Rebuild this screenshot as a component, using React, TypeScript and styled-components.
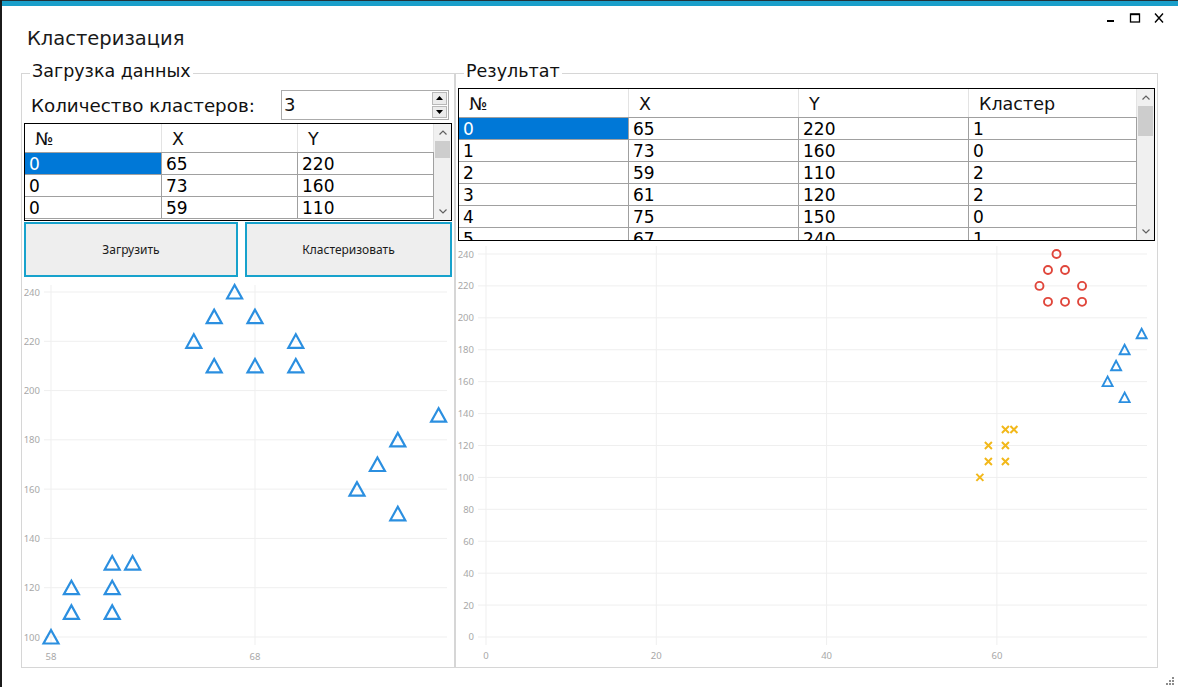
import styled, { createGlobalStyle } from "styled-components";

const Global = createGlobalStyle`
  html, body {
    margin: 0;
    padding: 0;
    background: #ffffff;
  }
  body {
    font-family: "DejaVu Sans", "Noto Sans", sans-serif;
    color: #111;
    overflow: hidden;
  }
`;

const Window = styled.div`
  width: 1178px;
  height: 687px;
  box-sizing: border-box;
  border-left: 2px solid #1b1b1b;
  display: flex;
  flex-direction: column;
  background: #fff;
`;

const TopStrip = styled.div`
  height: 5px;
  border-top: 1px solid #22343c;
  background: #1a9fca;
`;

const Header = styled.header`
  height: 55px;
  display: flex;
  justify-content: space-between;
  align-items: flex-start;
  padding-left: 25px;
`;

const Title = styled.h1`
  margin: 20px 0 0;
  font-size: 19.5px;
  font-weight: normal;
  line-height: 26px;
  color: #1a1a1a;
`;

const Controls = styled.div`
  display: flex;
  margin-top: 6px;
  padding-right: 7px;
`;

const Ctl = styled.button`
  width: 24px;
  height: 12px;
  padding: 0;
  border: none;
  background: none;
  display: flex;
  align-items: center;
  justify-content: center;
`;

const Main = styled.main`
  height: 607px;
  display: flex;
  padding-left: 19px;
`;

const GroupBox = styled.fieldset<{ $w: number }>`
  flex: 0 0 ${p => p.$w}px;
  width: ${p => p.$w}px;
  box-sizing: border-box;
  margin: 0;
  padding: 0 2px 1px;
  border: 1px solid #d6d6d6;
  min-width: 0;
  display: flex;
  flex-direction: column;
`;

const Legend = styled.legend`
  margin-left: 6px;
  padding: 0 2px 4px;
  font-size: 17.5px;
  line-height: 20px;
`;

const ClusterRow = styled.div`
  display: flex;
  align-items: center;
  height: 30px;
  margin-top: 5px;
`;

const FieldLabel = styled.label`
  flex: 0 0 257px;
  box-sizing: border-box;
  padding-left: 7px;
  font-size: 18.3px;
`;

const Spin = styled.div`
  width: 168px;
  height: 30px;
  box-sizing: border-box;
  border: 1px solid #ababab;
  display: flex;
`;

const SpinValue = styled.div`
  flex: 1;
  padding-left: 2px;
  font-size: 18px;
  line-height: 28px;
`;

const SpinButtons = styled.div`
  width: 15px;
  margin: 1px 1px 1px 0;
  display: flex;
  flex-direction: column;
  gap: 1px;
`;

const SpinBtn = styled.div`
  flex: 1;
  background: #ececec;
  border: 1px solid #b9b9b9;
  display: flex;
  align-items: center;
  justify-content: center;
`;

const Grid = styled.div<{ $h: number; $top: number }>`
  display: flex;
  height: ${p => p.$h}px;
  margin-top: ${p => p.$top}px;
  box-sizing: border-box;
  border: 1px solid #000;
  overflow: hidden;
  flex-shrink: 0;
  background: #fff;
`;

const Sheet = styled.div`
  flex: 1;
  overflow: hidden;
`;

const HeadRow = styled.div`
  display: flex;
  height: 29px;
  box-sizing: border-box;
  border-bottom: 1px solid #a0a0a0;
`;

const HeadCell = styled.div<{ $w: number }>`
  flex: 0 0 ${p => p.$w}px;
  box-sizing: border-box;
  padding-left: 10px;
  border-right: 1px solid #e3e3e3;
  font-size: 17.5px;
  line-height: 31px;
`;

const Row = styled.div`
  display: flex;
  height: 22px;
`;

const Cell = styled.div<{ $w: number; $sel?: boolean }>`
  flex: 0 0 ${p => p.$w}px;
  box-sizing: border-box;
  padding-left: 4px;
  border-right: 1px solid #a0a0a0;
  border-bottom: 1px solid #a0a0a0;
  background: ${p => (p.$sel ? "#0078d7" : "#fff")};
  color: ${p => (p.$sel ? "#fff" : "#000")};
  font-size: 17px;
  line-height: 23px;
`;

const ScrollBar = styled.div`
  flex: 0 0 17px;
  background: #f0f0f0;
  display: flex;
  flex-direction: column;
`;

const ScrollArrow = styled.div`
  height: 17px;
  display: flex;
  align-items: center;
  justify-content: center;
`;

const ScrollTrack = styled.div`
  flex: 1;
  padding: 0 1px;
`;

const Thumb = styled.div<{ $h: number }>`
  height: ${p => p.$h}px;
  background: #cdcdcd;
`;

const ButtonRow = styled.div`
  display: flex;
  gap: 7px;
  height: 55px;
  margin-top: 1px;
  flex-shrink: 0;
`;

const ActionButton = styled.button<{ $w?: number }>`
  flex: ${p => (p.$w ? `0 0 ${p.$w}px` : "1")};
  border: 2px solid #17a2cc;
  background: #eeeeee;
  font-family: "Noto Sans", sans-serif;
  font-size: 12px;
  color: #1a1a1a;
  padding: 0;
`;

const ChartBox = styled.div`
  flex: 1;
  min-height: 0;
`;

const Plot = styled.svg`
  display: block;
  font-family: "Noto Sans", sans-serif;
  font-size: 9.5px;
`;

const Footer = styled.footer`
  flex: 1;
  display: flex;
  justify-content: flex-end;
  align-items: flex-start;
  padding: 7px 4px 0 0;
`;

type Cellv = string | number;

const Chevron = ({ down }: { down?: boolean }) => (
  <svg width="8" height="5" viewBox="0 0 8 5">
    <polyline
      points={down ? "0.5,0.5 4,4 7.5,0.5" : "0.5,4.5 4,1 7.5,4.5"}
      fill="none"
      stroke="#606060"
      strokeWidth="1.2"
    />
  </svg>
);

interface GridProps {
  cols: string[];
  widths: number[];
  rows: Cellv[][];
  height: number;
  top: number;
  thumb: number;
}

const DataGrid = ({ cols, widths, rows, height, top, thumb }: GridProps) => (
  <Grid $h={height} $top={top}>
    <Sheet>
      <HeadRow>
        {cols.map((c, i) => (
          <HeadCell key={c} $w={widths[i]}>
            {c}
          </HeadCell>
        ))}
      </HeadRow>
      {rows.map((r, ri) => (
        <Row key={ri}>
          {r.map((v, ci) => (
            <Cell key={ci} $w={widths[ci]} $sel={ri === 0 && ci === 0}>
              {v}
            </Cell>
          ))}
        </Row>
      ))}
    </Sheet>
    <ScrollBar>
      <ScrollArrow>
        <Chevron />
      </ScrollArrow>
      <ScrollTrack>
        <Thumb $h={thumb} />
      </ScrollTrack>
      <ScrollArrow>
        <Chevron down />
      </ScrollArrow>
    </ScrollBar>
  </Grid>
);

// кластеры: 0 - треугольники, 1 - круги, 2 - крестики
const points: [number, number, number][] = [
  [65, 220, 1], [73, 160, 0], [59, 110, 2], [61, 120, 2], [75, 150, 0], [67, 240, 1],
  [66, 230, 1], [68, 230, 1], [70, 220, 1], [66, 210, 1], [68, 210, 1], [70, 210, 1],
  [77, 190, 0], [75, 180, 0], [74, 170, 0], [61, 130, 2], [62, 130, 2], [59, 120, 2],
  [61, 110, 2], [58, 100, 2],
];

const BLUE = "#2b8fe0";
const RED = "#e0463b";
const YELLOW = "#f2b81a";
const GRID = "#efefef";
const LABEL = "#a8a8a8";

const tri = (cx: number, cy: number, w: number, h: number) =>
  `${cx},${cy - h / 2 - 0.5} ${cx - w / 2},${cy + h / 2} ${cx + w / 2},${cy + h / 2}`;

const LX = (x: number) => 27 + (x - 58) * 20.4;
const LY = (y: number) => 15 + (240 - y) * 2.4643;

const SourceChart = () => {
  const ys = [100, 120, 140, 160, 180, 200, 220, 240];
  return (
    <Plot width={427} height={389}>
      {ys.map(v => (
        <g key={v}>
          <line x1={20} x2={423} y1={LY(v)} y2={LY(v)} stroke={GRID} />
          <text x={16} y={LY(v) + 3.5} textAnchor="end" fill={LABEL}>
            {v}
          </text>
        </g>
      ))}
      {[58, 68].map(v => (
        <g key={v}>
          <line x1={LX(v)} x2={LX(v)} y1={8} y2={368} stroke={GRID} />
          <text x={LX(v)} y={383} textAnchor="middle" fill={LABEL}>
            {v}
          </text>
        </g>
      ))}
      {points.map(([x, y], i) => (
        <polygon key={i} points={tri(LX(x), LY(y), 15, 13)} fill="none" stroke={BLUE} strokeWidth={2.2} />
      ))}
    </Plot>
  );
};

const RX = (x: number) => 28 + x * 8.515;
const RY = (y: number) => 13 + (240 - y) * 1.5958;

const Marker = ({ x, y, c }: { x: number; y: number; c: number }) => {
  const cx = RX(x);
  const cy = RY(y);
  if (c === 1) return <circle cx={cx} cy={cy} r={4} fill="none" stroke={RED} strokeWidth={1.9} />;
  if (c === 2)
    return (
      <path
        d={`M${cx - 3.5} ${cy - 3.5}L${cx + 3.5} ${cy + 3.5}M${cx + 3.5} ${cy - 3.5}L${cx - 3.5} ${cy + 3.5}`}
        stroke={YELLOW}
        strokeWidth={2}
      />
    );
  return <polygon points={tri(cx, cy, 10, 9)} fill="none" stroke={BLUE} strokeWidth={1.9} />;
};

const ResultChart = () => {
  const ys = Array.from({ length: 13 }, (_, i) => i * 20);
  return (
    <Plot width={696} height={425}>
      {ys.map(v => (
        <g key={v}>
          <line x1={20} x2={689} y1={RY(v)} y2={RY(v)} stroke={GRID} />
          <text x={16} y={RY(v) + 3.5} textAnchor="end" fill={LABEL}>
            {v}
          </text>
        </g>
      ))}
      {[0, 20, 40, 60].map(v => (
        <g key={v}>
          <line x1={RX(v)} x2={RX(v)} y1={5} y2={404} stroke={GRID} />
          <text x={RX(v)} y={418} textAnchor="middle" fill={LABEL}>
            {v}
          </text>
        </g>
      ))}
      {points.map(([x, y, c], i) => (
        <Marker key={i} x={x} y={y} c={c} />
      ))}
    </Plot>
  );
};

const App = () => {
  const source = points.slice(0, 3).map(([x, y]) => [0, x, y]);
  const result = points.slice(0, 6).map(([x, y, c], i) => [i, x, y, c]);
  return (
    <Window>
      <Global />
      <TopStrip />
      <Header>
        <Title>Кластеризация</Title>
        <Controls>
          <Ctl aria-label="Свернуть">
            <svg width="12" height="12" viewBox="0 0 12 12">
              <rect x="2" y="8" width="7" height="2" fill="#000" />
            </svg>
          </Ctl>
          <Ctl aria-label="Развернуть">
            <svg width="12" height="12" viewBox="0 0 12 12">
              <rect x="1.5" y="2" width="9" height="8" fill="none" stroke="#000" strokeWidth="1.3" />
              <line x1="1.5" x2="10.5" y1="2.4" y2="2.4" stroke="#000" strokeWidth="1.6" />
            </svg>
          </Ctl>
          <Ctl aria-label="Закрыть">
            <svg width="12" height="12" viewBox="0 0 12 12">
              <path d="M2 1.5L10 10.5M10 1.5L2 10.5" stroke="#000" strokeWidth="1.4" />
            </svg>
          </Ctl>
        </Controls>
      </Header>
      <Main>
        <GroupBox $w={434}>
          <Legend>Загрузка данных</Legend>
          <ClusterRow>
            <FieldLabel>Количество кластеров:</FieldLabel>
            <Spin>
              <SpinValue>3</SpinValue>
              <SpinButtons>
                <SpinBtn>
                  <svg width="7" height="4" viewBox="0 0 7 4">
                    <polygon points="3.5,0 7,4 0,4" fill="#000" />
                  </svg>
                </SpinBtn>
                <SpinBtn>
                  <svg width="7" height="4" viewBox="0 0 7 4">
                    <polygon points="0,0 7,0 3.5,4" fill="#000" />
                  </svg>
                </SpinBtn>
              </SpinButtons>
            </Spin>
          </ClusterRow>
          <DataGrid cols={["№", "X", "Y"]} widths={[137, 136, 136]} rows={source} height={98} top={3} thumb={17} />
          <ButtonRow>
            <ActionButton $w={214}>Загрузить</ActionButton>
            <ActionButton>Кластеризовать</ActionButton>
          </ButtonRow>
          <ChartBox>
            <SourceChart />
          </ChartBox>
        </GroupBox>
        <GroupBox $w={703}>
          <Legend>Результат</Legend>
          <DataGrid
            cols={["№", "X", "Y", "Кластер"]}
            widths={[170, 170, 170, 168]}
            rows={result}
            height={153}
            top={3}
            thumb={30}
          />
          <ChartBox>
            <ResultChart />
          </ChartBox>
        </GroupBox>
      </Main>
      <Footer>
        <svg width="10" height="10" viewBox="0 0 10 10">
          {[
            [8, 0], [5, 3], [8, 3], [2, 6], [5, 6], [8, 6],
          ].map(([x, y], i) => (
            <rect key={i} x={x} y={y + 2} width="2" height="2" fill="#8c8c8c" />
          ))}
        </svg>
      </Footer>
    </Window>
  );
};

export default App;
